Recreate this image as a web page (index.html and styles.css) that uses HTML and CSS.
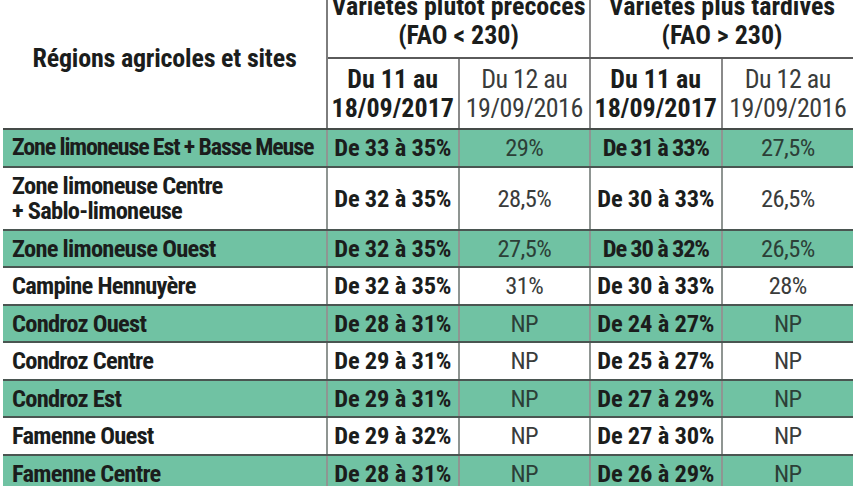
FILE: index.html
```html
<!DOCTYPE html>
<html lang="fr">
<head>
<meta charset="utf-8">
<title>Teneur en matière sèche</title>
<link rel="stylesheet" href="styles.css">
</head>
<body>
<table class="grid">
  <colgroup>
    <col class="c-region">
    <col class="c-val">
    <col class="c-val">
    <col class="c-val">
    <col class="c-val">
  </colgroup>
  <thead>
    <tr class="h1">
      <th rowspan="2" class="h-region">Régions agricoles et sites</th>
      <th colspan="2" class="h-group">Variétés plutôt précoces<br>(FAO &lt; 230)</th>
      <th colspan="2" class="h-group">Variétés plus tardives<br>(FAO &gt; 230)</th>
    </tr>
    <tr class="h2">
      <th class="h-date strong">Du 11 au<br>18/09/2017</th>
      <th class="h-date light">Du 12 au<br>19/09/2016</th>
      <th class="h-date strong">Du 11 au<br>18/09/2017</th>
      <th class="h-date light">Du 12 au<br>19/09/2016</th>
    </tr>
  </thead>
  <tbody>
    <tr class="green">
      <td class="region squeeze">Zone limoneuse Est + Basse Meuse</td>
      <td class="val strong">De 33 à 35%</td>
      <td class="val light">29%</td>
      <td class="val strong tight">De 31 à 33%</td>
      <td class="val light">27,5%</td>
    </tr>
    <tr class="white tall">
      <td class="region two">Zone limoneuse Centre<br>+ Sablo-limoneuse</td>
      <td class="val strong">De 32 à 35%</td>
      <td class="val light">28,5%</td>
      <td class="val strong">De 30 à 33%</td>
      <td class="val light">26,5%</td>
    </tr>
    <tr class="green">
      <td class="region">Zone limoneuse Ouest</td>
      <td class="val strong">De 32 à 35%</td>
      <td class="val light">27,5%</td>
      <td class="val strong tight">De 30 à 32%</td>
      <td class="val light">26,5%</td>
    </tr>
    <tr class="white">
      <td class="region">Campine Hennuyère</td>
      <td class="val strong">De 32 à 35%</td>
      <td class="val light">31%</td>
      <td class="val strong">De 30 à 33%</td>
      <td class="val light">28%</td>
    </tr>
    <tr class="green">
      <td class="region">Condroz Ouest</td>
      <td class="val strong">De 28 à 31%</td>
      <td class="val light">NP</td>
      <td class="val strong">De 24 à 27%</td>
      <td class="val light">NP</td>
    </tr>
    <tr class="white">
      <td class="region">Condroz Centre</td>
      <td class="val strong">De 29 à 31%</td>
      <td class="val light">NP</td>
      <td class="val strong">De 25 à 27%</td>
      <td class="val light">NP</td>
    </tr>
    <tr class="green">
      <td class="region">Condroz Est</td>
      <td class="val strong">De 29 à 31%</td>
      <td class="val light">NP</td>
      <td class="val strong">De 27 à 29%</td>
      <td class="val light">NP</td>
    </tr>
    <tr class="white">
      <td class="region">Famenne Ouest</td>
      <td class="val strong">De 29 à 32%</td>
      <td class="val light">NP</td>
      <td class="val strong">De 27 à 30%</td>
      <td class="val light">NP</td>
    </tr>
    <tr class="green">
      <td class="region">Famenne Centre</td>
      <td class="val strong">De 28 à 31%</td>
      <td class="val light">NP</td>
      <td class="val strong">De 26 à 29%</td>
      <td class="val light">NP</td>
    </tr>
  </tbody>
</table>
</body>
</html>
```
FILE: styles.css
```css
html, body {
  margin: 0;
  padding: 0;
  background: #ffffff;
  overflow: hidden;
}

body {
  font-family: "Roboto Condensed", "Roboto", "Liberation Sans", sans-serif;
  font-stretch: 75%;
  color: #1b1d1c;
}

.grid {
  table-layout: fixed;
  border-collapse: collapse;
  width: 850px;
  margin: -8px 0 0 3px;
}

.c-region { width: 324px; }
.c-val { width: 131.5px; }

th, td {
  padding: 0;
  border: 0;
}

/* header */
.h-region {
  font-size: 26px;
  font-weight: 700;
  line-height: 29px;
  text-align: center;
  vertical-align: middle;
  padding-bottom: 4px;
  letter-spacing: -0.2px;
  border-right: 2px solid #7d7d7d;
  border-bottom: 2px solid #454b48;
}

.h1 th.h-group {
  font-size: 26px;
  font-weight: 700;
  line-height: 29px;
  text-align: center;
  vertical-align: top;
  padding: 0 0 4px;
  height: 61px;
  border-bottom: 2px solid #5a5a5a;
  border-right: 2px solid #8a8a8a;
}
.h1 th.h-group:last-child { border-right: 0; }

.h2 th {
  font-size: 26px;
  line-height: 29px;
  text-align: center;
  vertical-align: top;
  padding: 6px 0 4px;
  height: 59px;
  border-right: 2px solid #8a8a8a;
  border-bottom: 2px solid #454b48;
}
.h2 th:last-child { border-right: 0; }
.h2 th.light { letter-spacing: -0.5px; }

.strong { font-weight: 700; color: #1b1d1c; }
.light { font-weight: 400; color: #3a3c3b; }

/* body rows */
tbody td {
  height: 35.5px;
  font-size: 24.5px;
  line-height: 25px;
  vertical-align: middle;
  white-space: nowrap;
  overflow: hidden;
  border-bottom: 2px solid #4a5551;
  border-right: 2px solid #8f9592;
}
tbody td:last-child { border-right: 0; }

tbody tr.tall td { height: 61px; }

.green td { background: #70c2a3; }
.white td { background: #ffffff; }
.green td.light { color: #2c3f37; }

.region {
  font-weight: 700;
  padding-left: 9px;
  letter-spacing: -0.75px;
  text-align: left;
}
.region.squeeze {
  font-size: 24px;
  letter-spacing: -1.15px;
}

.val { text-align: center; }
.val.strong { letter-spacing: -0.2px; }
.val.tight { letter-spacing: -1.2px; }
.val.light { letter-spacing: -0.6px; }
```
